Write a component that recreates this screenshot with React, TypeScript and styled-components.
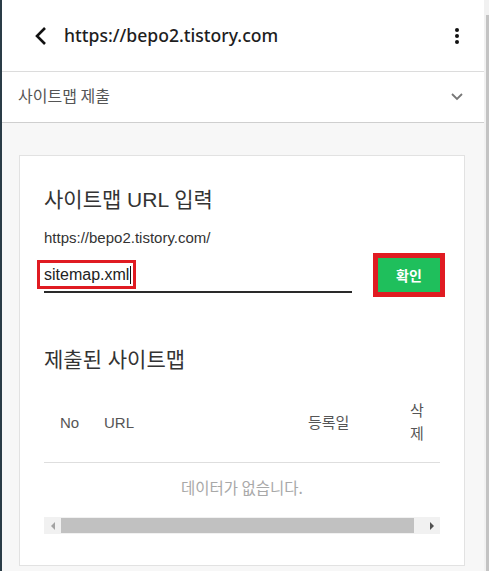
import React from "react";
import styled, { createGlobalStyle } from "styled-components";

const Global = createGlobalStyle`
  html, body { margin: 0; padding: 0; overflow: hidden; }
  body { font-family: "Liberation Sans", "Noto Sans CJK KR", sans-serif; background: #fff; }
  * { box-sizing: border-box; }
`;

const Frame = styled.div`
  display: flex;
  width: 489px;
  height: 571px;
`;

const LeftEdge = styled.div`
  width: 2px;
  background: #2a3c47;
`;

const Main = styled.div`
  flex: 1;
  display: flex;
  flex-direction: column;
  background: #f7f7f7;
  min-width: 0;
`;

const Rail = styled.div`
  width: 5px;
  background: #f1f1f1;
  display: flex;
  justify-content: flex-end;
  padding-top: 15px;
`;

const RailThumb = styled.div`
  width: 3px;
  height: 556px;
  background: #c3c3c3;
`;

const Header = styled.header`
  height: 72px;
  display: flex;
  align-items: center;
  background: #fff;
  border-bottom: 1px solid #dcdcdc;
  padding: 0 24px 0 32px;
  gap: 16px;
`;

const HeaderTitle = styled.div`
  flex: 1;
  font-family: "Noto Sans", "Noto Sans CJK KR", sans-serif;
  font-size: 17.6px;
  font-weight: 500;
  color: #1e1e1e;
  padding-bottom: 2px;
`;

const IconBox = styled.div`
  display: flex;
  align-items: center;
`;

const SectionRow = styled.div`
  height: 51px;
  display: flex;
  align-items: center;
  justify-content: space-between;
  background: #fff;
  border-bottom: 1px solid #cfcfcf;
  padding: 0 20px 0 16px;
`;

const SectionLabel = styled.div`
  font-family: "Noto Sans CJK KR", sans-serif;
  font-size: 16px;
  color: #555;
  padding-bottom: 4px;
`;

const Content = styled.div`
  padding: 32px 19px 0 17px;
`;

const Card = styled.div`
  background: #fff;
  border: 1px solid #e2e2e2;
  padding: 29px 24px 31px 24px;
`;

const CardTitle = styled.h2<{ $mt?: number }>`
  margin: ${(p) => p.$mt ?? 0}px 0 0 0;
  font-family: "Liberation Sans", "Noto Sans CJK KR", sans-serif;
  font-weight: 400;
  font-size: 21px;
  line-height: 30px;
  color: #333;
`;

const BaseUrl = styled.div`
  margin-top: 14px;
  font-size: 15px;
  line-height: 18px;
  color: #333;
`;

const InputRow = styled.div`
  margin-top: 12px;
  display: flex;
  align-items: flex-start;
  justify-content: space-between;
`;

const InputWrap = styled.div`
  width: 308px;
  height: 34px;
  border-bottom: 2px solid #2a2a2a;
  display: flex;
  align-items: flex-start;
`;

const Highlight = styled.div`
  margin-left: -7px;
  margin-top: 1px;
  border: 3px solid #e01b22;
  height: 29px;
  padding: 0 2px 0 4px;
  display: flex;
  align-items: center;
  font-size: 16px;
  color: #222;
`;

const Caret = styled.span`
  display: inline-block;
  width: 1px;
  height: 18px;
  background: #111;
  margin-left: 1px;
`;

const ConfirmButton = styled.button`
  margin: -6px -5px 0 0;
  width: 72px;
  height: 44px;
  border: 5px solid #e01b22;
  background: #1fbf5c;
  color: #fff;
  font-family: "Noto Sans CJK KR", sans-serif;
  font-weight: 700;
  font-size: 14px;
  padding: 0;
`;

const Table = styled.div`
  margin-top: 22px;
`;

const HeadRow = styled.div`
  display: grid;
  grid-template-columns: 44px 204px 102px 47px;
  align-items: center;
  padding: 2px 0 17px;
  border-bottom: 1px solid #dedede;
`;

const HeadCell = styled.div<{ $narrow?: boolean }>`
  padding: 0 ${(p) => (p.$narrow ? 16 : 0)}px 0 16px;
  font-family: "Liberation Sans", "Noto Sans CJK KR", sans-serif;
  font-size: 15px;
  line-height: 23px;
  color: #555;
  white-space: ${(p) => (p.$narrow ? "normal" : "nowrap")};
  word-break: break-all;
`;

const Empty = styled.div`
  text-align: center;
  font-family: "Noto Sans CJK KR", sans-serif;
  font-size: 15.5px;
  color: #a8a8a8;
  padding: 13px 0 0;
  height: 54px;
`;

const HScroll = styled.div`
  height: 17px;
  background: #f1f1f1;
  display: flex;
  align-items: center;
`;

const ArrowBox = styled.div<{ $dark?: boolean }>`
  width: 17px;
  height: 17px;
  display: flex;
  align-items: center;
  justify-content: center;
  color: ${(p) => (p.$dark ? "#505050" : "#a3a3a3")};
`;

const Thumb = styled.div`
  flex: 1;
  height: 15px;
  background: #c1c1c1;
  margin-right: 9px;
`;

export default function App() {
  return (
    <>
      <Global />
      <Frame>
        <LeftEdge />
        <Main>
          <Header>
            <IconBox>
              <svg width="14" height="20" viewBox="0 0 14 20">
                <path d="M11 2 L3 10 L11 18" fill="none" stroke="#111" strokeWidth="2.6" />
              </svg>
            </IconBox>
            <HeaderTitle>https://bepo2.tistory.com</HeaderTitle>
            <IconBox>
              <svg width="6" height="18" viewBox="0 0 6 18">
                <circle cx="3" cy="3" r="2" fill="#111" />
                <circle cx="3" cy="9" r="2" fill="#111" />
                <circle cx="3" cy="15" r="2" fill="#111" />
              </svg>
            </IconBox>
          </Header>
          <SectionRow>
            <SectionLabel>사이트맵 제출</SectionLabel>
            <IconBox>
              <svg width="14" height="10" viewBox="0 0 14 10">
                <path d="M2 2 L7 7 L12 2" fill="none" stroke="#777" strokeWidth="1.8" />
              </svg>
            </IconBox>
          </SectionRow>
          <Content>
            <Card>
              <CardTitle>사이트맵 URL 입력</CardTitle>
              <BaseUrl>https://bepo2.tistory.com/</BaseUrl>
              <InputRow>
                <InputWrap>
                  <Highlight>
                    sitemap.xml
                    <Caret />
                  </Highlight>
                </InputWrap>
                <ConfirmButton>확인</ConfirmButton>
              </InputRow>
              <CardTitle $mt={48}>제출된 사이트맵</CardTitle>
              <Table>
                <HeadRow>
                  <HeadCell>No</HeadCell>
                  <HeadCell>URL</HeadCell>
                  <HeadCell>등록일</HeadCell>
                  <HeadCell $narrow>삭제</HeadCell>
                </HeadRow>
                <Empty>데이터가 없습니다.</Empty>
                <HScroll>
                  <ArrowBox>
                    <svg width="6" height="8" viewBox="0 0 6 8">
                      <path d="M5 0 L1 4 L5 8 Z" fill="currentColor" />
                    </svg>
                  </ArrowBox>
                  <Thumb />
                  <ArrowBox $dark>
                    <svg width="6" height="8" viewBox="0 0 6 8">
                      <path d="M1 0 L5 4 L1 8 Z" fill="currentColor" />
                    </svg>
                  </ArrowBox>
                </HScroll>
              </Table>
            </Card>
          </Content>
        </Main>
        <Rail>
          <RailThumb />
        </Rail>
      </Frame>
    </>
  );
}
